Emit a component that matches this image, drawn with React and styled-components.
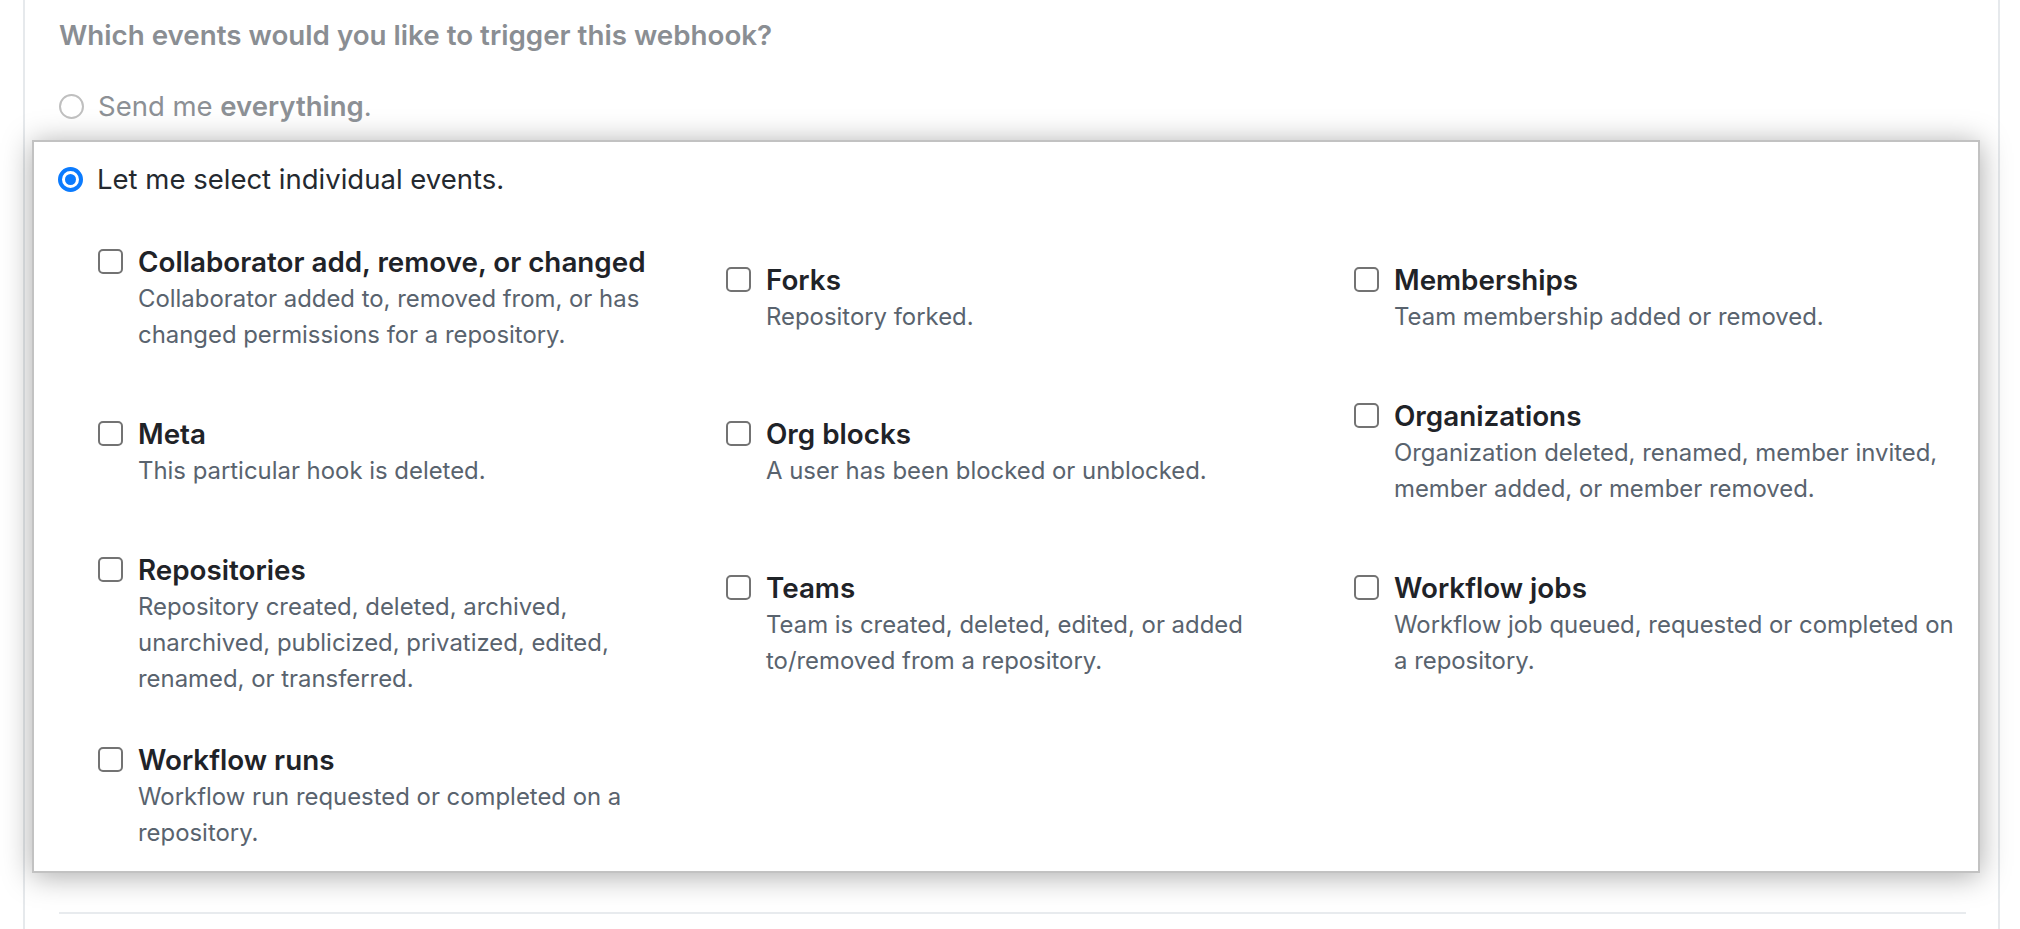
import React from "react";
import styled, { createGlobalStyle } from "styled-components";

const GlobalStyle = createGlobalStyle`
  html, body { margin: 0; padding: 0; background: #ffffff; }
  body {
    font-family: Inter, "Noto Sans", "Liberation Sans", sans-serif;
    -webkit-font-smoothing: antialiased;
  }
  *, *::before, *::after { box-sizing: border-box; }
`;

const Frame = styled.div`
  margin-left: 23px;
  width: 1977px;
  min-height: 929px;
  border-left: 2px solid #e6e9ec;
  border-right: 2px solid #e6e9ec;
  padding: 17px 32px 0 34px;
`;

const Heading = styled.h3`
  margin: 0;
  font-size: 27.75px;
  line-height: 36px;
  font-weight: 600;
  color: #8a8e93;
`;

const OptionRow = styled.label`
  display: flex;
  align-items: center;
  gap: 14px;
  height: 36px;
  margin-top: ${(p) => p.$mt || 0}px;
  font-size: 27.5px;
  color: ${(p) => (p.$muted ? "#8c9095" : "#24292f")};
  b { font-weight: 600; }
`;

const Radio = styled.span`
  position: relative;
  flex-shrink: 0;
  width: 25px;
  height: 25px;
  border-radius: 50%;
  background: #fff;
  border: ${(p) => (p.$checked ? "4px solid #0b7bfe" : "2px solid #bfbfbf")};
  &::after {
    content: "";
    display: ${(p) => (p.$checked ? "block" : "none")};
    position: absolute;
    left: 50%;
    top: 50%;
    width: 11px;
    height: 11px;
    margin: -5.5px 0 0 -5.5px;
    border-radius: 50%;
    background: #0b7bfe;
  }
`;

const Popup = styled.div`
  margin: 16px -14px 0 -27px;
  background: #ffffff;
  border: 2px solid #c2c2c2;
  box-shadow: 0 3px 28px rgba(0, 0, 0, 0.34);
  padding: 19px 0 20px 24px;
`;

const EventGrid = styled.div`
  display: grid;
  grid-template-columns: repeat(3, 628px);
  row-gap: 44px;
  align-items: center;
  margin-top: 46px;
  padding-left: 40px;
`;

const EventItem = styled.label`
  display: flex;
  align-items: flex-start;
  gap: 15px;
`;

const Checkbox = styled.span`
  flex-shrink: 0;
  width: 25px;
  height: 25px;
  margin-top: 6px;
  border: 2px solid #737373;
  border-radius: 5px;
  background: #fff;
`;

const EventText = styled.div`
  display: flex;
  flex-direction: column;
`;

const EventTitle = styled.span`
  font-size: 27.8px;
  line-height: 38px;
  font-weight: 600;
  color: #1f2328;
  white-space: nowrap;
`;

const EventDesc = styled.span`
  font-size: 23.9px;
  line-height: 36px;
  color: #59636e;
  white-space: nowrap;
`;

const Divider = styled.div`
  margin-top: 39px;
  height: 2px;
  background: #e8ebee;
`;

const events = [
  {
    title: "Collaborator add, remove, or changed",
    desc: ["Collaborator added to, removed from, or has", "changed permissions for a repository."],
  },
  { title: "Forks", desc: ["Repository forked."] },
  { title: "Memberships", desc: ["Team membership added or removed."] },
  { title: "Meta", desc: ["This particular hook is deleted."] },
  { title: "Org blocks", desc: ["A user has been blocked or unblocked."] },
  {
    title: "Organizations",
    desc: ["Organization deleted, renamed, member invited,", "member added, or member removed."],
  },
  {
    title: "Repositories",
    desc: [
      "Repository created, deleted, archived,",
      "unarchived, publicized, privatized, edited,",
      "renamed, or transferred.",
    ],
  },
  {
    title: "Teams",
    desc: ["Team is created, deleted, edited, or added", "to/removed from a repository."],
  },
  {
    title: "Workflow jobs",
    desc: ["Workflow job queued, requested or completed on", "a repository."],
  },
  {
    title: "Workflow runs",
    desc: ["Workflow run requested or completed on a", "repository."],
  },
];

function Event({ title, desc }) {
  return (
    <EventItem>
      <Checkbox />
      <EventText>
        <EventTitle>{title}</EventTitle>
        {desc.map((line) => (
          <EventDesc key={line}>{line}</EventDesc>
        ))}
      </EventText>
    </EventItem>
  );
}

export default function App() {
  return (
    <>
      <GlobalStyle />
      <Frame>
        <Heading>Which events would you like to trigger this webhook?</Heading>
        <OptionRow $muted $mt={35}>
          <Radio />
          <span>
            Send me <b>everything</b>.
          </span>
        </OptionRow>
        <Popup>
          <OptionRow>
            <Radio $checked />
            <span>Let me select individual events.</span>
          </OptionRow>
          <EventGrid>
            {events.map((e) => (
              <Event key={e.title} {...e} />
            ))}
          </EventGrid>
        </Popup>
        <Divider />
      </Frame>
    </>
  );
}
